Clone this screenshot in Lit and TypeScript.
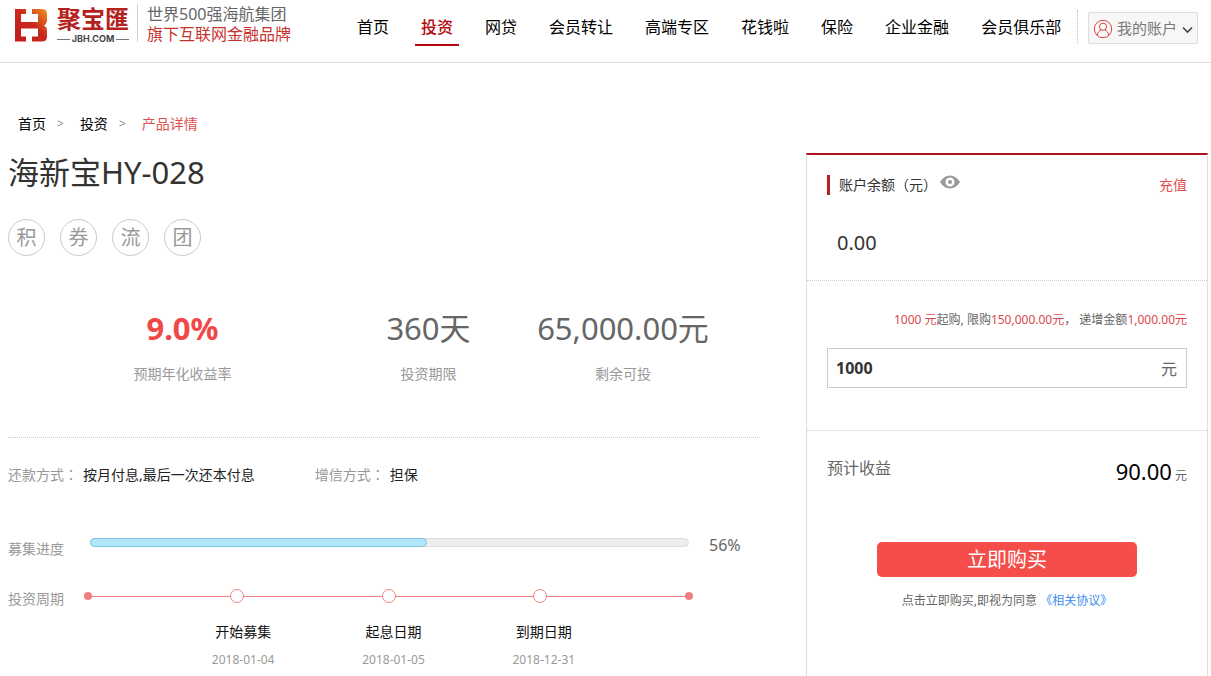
import { LitElement, html, css } from "lit";
import { customElement, property, state } from "lit/decorators.js";
import { classMap } from "lit/directives/class-map.js";

const NAV = ["首页", "投资", "网贷", "会员转让", "高端专区", "花钱啦", "保险", "企业金融", "会员俱乐部"];

const STATS = [
  { value: "9.0%", label: "预期年化收益率", hot: true },
  { value: "360天", label: "投资期限", hot: false },
  { value: "65,000.00元", label: "剩余可投", hot: false },
];

const STAGES = [
  { name: "开始募集", date: "2018-01-04" },
  { name: "起息日期", date: "2018-01-05" },
  { name: "到期日期", date: "2018-12-31" },
];

@customElement("site-header")
class SiteHeader extends LitElement {
  static styles = css`
    :host { display: block; border-bottom: 1px solid #ddd; }
    .bar { display: flex; align-items: flex-start; height: 62px; padding: 0 13px; box-sizing: border-box; white-space: nowrap; }
    .brand { display: flex; width: 338px; padding-top: 6px; text-decoration: none; flex: none; box-sizing: border-box; }
    .mark { width: 36px; height: 36px; margin-right: 6px; }
    .name { display: flex; flex-direction: column; width: 76px; align-items: center; }
    .cn { font-family: "Liberation Sans", "Noto Sans CJK SC", sans-serif; font-size: 24px; line-height: 28px; font-weight: 700; color: #b5211d; }
    .domain { display: flex; align-items: center; gap: 2px; width: 72px; font: 700 9px/10px "Inter", sans-serif; color: #444; }
    .domain::before, .domain::after { content: ""; flex: 1; height: 1px; background: #777; }
    .slogan { border-left: 1px solid #cfd4d6; margin-left: 6px; padding-left: 9px; height: 38px; font-size: 16px; line-height: 20px; margin-top: -2px; }
    .slogan span { display: block; color: #666; }
    .slogan .second { color: #c8322d; }
    nav { display: flex; gap: 20px; flex: 1; }
    nav a { padding: 15px 6px 4px; font-size: 16px; line-height: 25px; color: #000; text-decoration: none; border-bottom: 2px solid transparent; }
    nav .active { color: #b5090f; border-color: #b5090f; font-weight: 500; }
    .account { border-left: 1px dotted #bbb; margin-top: 10px; padding: 2px 0 0 10px; height: 34px; box-sizing: border-box; }
    button { display: flex; align-items: center; gap: 4px; width: 110px; height: 32px; padding: 0 4px; border: 1px solid #ddd; border-radius: 2px; background: #f7f7f7; font: inherit; font-size: 15px; line-height: 20px; color: #777; }
    button span { flex: 1; text-align: left; }
    svg { display: block; flex: none; }
    .person { margin-top: 2px; }
    .arrow { margin-top: 4px; }
  `;
  render() {
    return html`
      <header class="bar">
        <a class="brand" href="#" aria-label="聚宝匯">
          <svg class="mark" viewBox="0 0 36 36">
            <defs>
              <linearGradient id="g" x1="0" y1="1" x2="1" y2="0">
                <stop offset="0" stop-color="#c11a1c" /><stop offset=".55" stop-color="#c92a1d" /><stop offset="1" stop-color="#f2931f" />
              </linearGradient>
            </defs>
            <path fill="url(#g)" d="M2 3h11v5H8v8h17V8h-6V3h10q5 0 5 5v6q0 3.500-3 5.500 3 1.500 3 5v6q0 5-5 5H19v-5h6v-8H8v8h5v5H2z" />
          </svg>
          <span class="name"><span class="cn">聚宝匯</span><span class="domain">JBH.COM</span></span>
          <span class="slogan"><span>世界500强海航集团</span><span class="second">旗下互联网金融品牌</span></span>
        </a>
        <nav>
          ${NAV.map((n, i) => html`<a href="#" class=${classMap({ active: i === 1 })}>${n}</a>`)}
        </nav>
        <div class="account">
          <button type="button">
            <svg class="person" width="20" height="20" viewBox="0 0 20 20" fill="none" stroke="#d9434a">
              <circle cx="10" cy="10" r="8.7" /><circle cx="10" cy="7.7" r="3.6" />
              <path d="M4.3 16.2c.4-3 2-4.600 3.800-5.200M15.700 16.200c-.4-3-2-4.600-3.800-5.200" />
            </svg>
            <span>我的账户</span>
            <svg class="arrow" width="11" height="8" viewBox="0 0 11 8" fill="none" stroke="#444" stroke-width="1.6"><path d="M1 1.500l4.500 4.500L10 1.500" /></svg>
          </button>
        </div>
      </header>
    `;
  }
}

@customElement("product-detail")
class ProductDetail extends LitElement {
  @property({ type: Number }) progress = 56;
  static styles = css`
    :host { display: block; }
    h1 { margin: 0; font-size: 31px; line-height: 38px; font-weight: inherit; color: #333; }
    .tags { display: flex; gap: 15px; margin: 28px 0 0; padding: 0; list-style: none; }
    .tags li { width: 37px; height: 37px; box-sizing: border-box; border: 1px solid #ccc; border-radius: 50%; text-align: center; font-size: 20px; line-height: 35px; color: #999; }
    .stats { display: grid; grid-template-columns: 349fr 143fr 246fr; padding: 52px 14px 52px 0; margin: 0; text-align: center; border-bottom: 1px dotted #ccc; white-space: nowrap; }
    .stat { display: flex; flex-direction: column-reverse; gap: 15px; }
    .stat dd { margin: 0; font-size: 31px; line-height: 40px; color: #666; }
    .stat .hot { color: #f04848; font-weight: 700; }
    .stat dt { font-size: 14px; line-height: 22px; color: #999; }
    .terms { display: flex; gap: 60px; margin: 27px 0 0; font-size: 14px; line-height: 20px; }
    .terms div { display: flex; gap: 5px; }
    .terms dt { color: #999; }
    .terms dt span { font-family: "Noto Sans", "Noto Sans CJK TC", sans-serif; }
    .terms dd { margin: 0; color: #222; }
    .row { display: grid; grid-template-columns: 82px 1fr 71px; font-size: 14px; line-height: 20px; color: #999; }
    .fund { margin-top: 50px; }
    .cycle { margin-top: 26px; }
    .row > span:first-child { padding-top: 4px; }
    .track { height: 9px; margin-top: 3px; box-sizing: border-box; border: 1px solid #ddd; border-radius: 5px; background: #eee; }
    .fill { height: 9px; margin: -1px; box-sizing: border-box; border: 1px solid #7cc3e0; border-radius: 5px; background: #b2e6fb; }
    .percent { padding-left: 20px; font-size: 16px; color: #666; }
    .line { display: flex; align-items: center; justify-content: space-between; height: 14px; margin: 4px -4px 0 -6px; background: linear-gradient(#ee8282, #ee8282) center / calc(100% - 8px) 1px no-repeat; }
    .line i { width: 8px; height: 8px; border-radius: 50%; background: #f08080; }
    .line .stop { width: 14px; height: 14px; box-sizing: border-box; border: 1px solid #ee8282; background: #fff; }
    .stages { display: grid; grid-template-columns: repeat(3, 1fr); margin: 19px 0 0; padding: 0 70px 0 78px; list-style: none; text-align: center; white-space: nowrap; }
    .stages li { display: flex; flex-direction: column; gap: 8px; }
    .stages b { font-weight: inherit; color: #111; }
    .stages time { font-size: 12px; color: #999; }
  `;
  render() {
    return html`
      <h1>海新宝HY-028</h1>
      <ul class="tags">${["积", "券", "流", "团"].map((t) => html`<li>${t}</li>`)}</ul>
      <dl class="stats">
        ${STATS.map((s) => html`<div class="stat"><dt>${s.label}</dt><dd class=${classMap({ hot: s.hot })}>${s.value}</dd></div>`)}
      </dl>
      <dl class="terms">
        <div><dt>还款方式<span>：</span></dt><dd>按月付息,最后一次还本付息</dd></div>
        <div><dt>增信方式<span>：</span></dt><dd>担保</dd></div>
      </dl>
      <div class="row fund">
        <span>募集进度</span>
        <div class="track" role="progressbar" aria-valuenow=${this.progress}><div class="fill" style="width:${this.progress + 0.5}%"></div></div>
        <span class="percent">${this.progress}%</span>
      </div>
      <div class="row cycle">
        <span>投资周期</span>
        <div>
          <div class="line"><i></i><i class="stop"></i><i class="stop"></i><i class="stop"></i><i></i></div>
          <ol class="stages">${STAGES.map((s) => html`<li><b>${s.name}</b><time>${s.date}</time></li>`)}</ol>
        </div>
      </div>
    `;
  }
}

@customElement("buy-panel")
class BuyPanel extends LitElement {
  @state() private amount = "1000";
  static styles = css`
    :host { display: block; border: 1px solid #ddd; border-top: 2px solid #a9151b; border-bottom: 0; color: #666; }
    section { padding: 0 20px; border-bottom: 1px dotted #ccc; }
    section:last-child { border: 0; }
    a { text-decoration: none; }
    .head { display: flex; align-items: center; padding-top: 20px; font-size: 14px; line-height: 20px; color: #333; }
    .head h2 { margin: 0; padding-left: 9px; border-left: 3px solid #b5211d; font: inherit; }
    .head h2 span { font-family: "Noto Sans", "Noto Sans CJK TC", sans-serif; }
    .head button { display: flex; margin: 0 auto 6px 3px; padding: 0; border: 0; background: none; }
    .head a { color: #e04f4f; }
    .balance { margin: 33px 0 22px; padding-left: 10px; font-size: 20px; line-height: 30px; color: #333; }
    .limits { margin: 0; padding-top: 28px; text-align: right; font-size: 12px; line-height: 22px; white-space: nowrap; }
    em { font-style: normal; color: #d9484b; }
    .field { display: flex; align-items: center; height: 40px; margin: 17px 0 42px; padding: 0 9px 0 8px; box-sizing: border-box; border: 1px solid #ccc; font-size: 16px; }
    input { flex: 1; min-width: 0; padding: 0; border: 0; outline: 0; background: none; font: inherit; font-weight: 700; color: #333; }
    .income { display: flex; justify-content: space-between; padding-top: 24px; font-size: 16px; line-height: 26px; }
    .income output { padding-top: 3px; font-size: 12px; }
    .income strong { font-size: 22px; font-weight: inherit; color: #000; }
    .buy { display: block; width: 260px; height: 35px; margin: 53px auto 0; padding: 0; border: 0; border-radius: 5px; background: #f54d4a; font: inherit; font-size: 20px; line-height: 35px; color: #fff; }
    .agree { margin: 14px 0 0; text-align: center; font-size: 12px; line-height: 20px; }
    .agree a { color: #3b8cf0; }
  `;
  render() {
    return html`
      <section>
        <div class="head">
          <h2>账户余额<span>（</span>元<span>）</span></h2>
          <button type="button" aria-label="隐藏余额">
            <svg width="20" height="14" viewBox="0 0 20 14"><path fill="#999" fill-rule="evenodd" d="M0 7Q4 .5 10 .5T20 7q-4 6.500-10 6.500T0 7zm10-4.500a4.500 4.500 0 1 0 0 9 4.500 4.500 0 0 0 0-9z" /><circle cx="10" cy="7" r="2" fill="#999" /></svg>
          </button>
          <a href="#">充值</a>
        </div>
        <p class="balance">0.00</p>
      </section>
      <section>
        <p class="limits"><em>1000 元</em>起购, 限购<em>150,000.00元</em>， 递增金额<em>1,000.00元</em></p>
        <label class="field">
          <input aria-label="购买金额" .value=${this.amount} @input=${(e: Event) => (this.amount = (e.target as HTMLInputElement).value)} />
          <span>元</span>
        </label>
      </section>
      <section>
        <div class="income"><span>预计收益</span><output><strong>${(Number(this.amount) * 0.09).toFixed(2)}</strong> 元</output></div>
        <button class="buy" type="button">立即购买</button>
        <p class="agree">点击立即购买,即视为同意 <a href="#">《相关协议》</a></p>
      </section>
    `;
  }
}

@customElement("app-root")
class AppRoot extends LitElement {
  static styles = css`
    :host { display: flex; flex-direction: column; min-height: 100vh; background: #fff; font-family: "Noto Sans", "Noto Sans CJK SC", sans-serif; font-weight: 400; }
    .crumbs { display: flex; padding: 51px 18px 0; font-size: 14px; line-height: 20px; color: #888; }
    .crumbs i { font-style: normal; font-size: 12px; margin: 0 16px 0 11px; }
    .crumbs a { color: #000; text-decoration: none; }
    .crumbs span { color: #e04f4f; }
    main { flex: 1; display: grid; grid-template-columns: minmax(0, 1fr) 402px; gap: 46px; padding: 19px 3px 0 8px; }
  `;
  render() {
    return html`
      <site-header></site-header>
      <div class="crumbs"><a href="#">首页</a><i>&gt;</i><a href="#">投资</a><i>&gt;</i><span>产品详情</span></div>
      <main><product-detail></product-detail><buy-panel></buy-panel></main>
    `;
  }
}
